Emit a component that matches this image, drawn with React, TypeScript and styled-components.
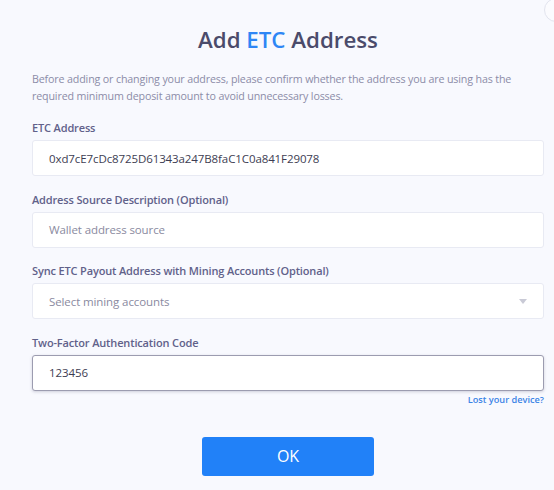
import React from "react";
import styled, { createGlobalStyle } from "styled-components";

const Global = createGlobalStyle`
  html, body { margin: 0; padding: 0; background: #f8f9fe; }
  body { font-family: "Open Sans", "Noto Sans", sans-serif; }
  * { box-sizing: border-box; }
`;

const Page = styled.div`
  position: relative;
  width: 554px;
  height: 490px;
  overflow: hidden;
  background: #f8f9fe;
  padding: 24px 10px 0 32px;
  display: flex;
  flex-direction: column;
`;

const CloseRing = styled.div`
  position: absolute;
  top: -2px;
  right: -14px;
  width: 24px;
  height: 24px;
  border-radius: 50%;
  border: 1px solid #e2e4ee;
  background: #fbfbfe;
`;

const Title = styled.h1`
  margin: 0;
  text-align: center;
  font-size: 22.3px;
  line-height: 32px;
  font-weight: 600;
  color: #4b4b6b;
`;

const Accent = styled.span`
  color: #2e86f5;
`;

const Notice = styled.p`
  margin: 15px 0 0;
  font-size: 10.7px;
  line-height: 17px;
  letter-spacing: -0.15px;
  color: #8c8ca8;
`;

const Form = styled.div`
  margin-top: 15px;
  display: flex;
  flex-direction: column;
  gap: 15.5px;
`;

const Field = styled.div`
  display: flex;
  flex-direction: column;
  gap: 4px;
`;

const Label = styled.label`
  font-size: 11px;
  line-height: 16px;
  font-weight: 600;
  letter-spacing: -0.15px;
  color: #61618a;
`;

const Box = styled.div<{ $focused?: boolean }>`
  height: 36px;
  display: flex;
  align-items: center;
  justify-content: space-between;
  padding: 0 16px 0 16px;
  background: #ffffff;
  border: 1px solid ${(p) => (p.$focused ? "#9c9cb0" : "#e8eaf3")};
  border-radius: 3px;
  box-shadow: ${(p) => (p.$focused ? "0 1px 3px rgba(80,80,110,0.25)" : "none")};
  font-size: 11.5px;
  letter-spacing: -0.1px;
`;

const Placeholder = styled.span`
  color: #8a8aa0;
`;

const Value = styled.span`
  color: #3d3d52;
`;

const Caret = styled.span`
  width: 0;
  height: 0;
  border-left: 4.5px solid transparent;
  border-right: 4.5px solid transparent;
  border-top: 5px solid #c9cad6;
`;

const LinkRow = styled.div`
  display: flex;
  justify-content: flex-end;
  margin-top: 2px;
`;

const Link = styled.a`
  font-size: 9.2px;
  font-weight: 600;
  color: #3b84e6;
  text-decoration: none;
`;

const Actions = styled.div`
  display: flex;
  justify-content: center;
  margin-top: 31px;
`;

const OkButton = styled.button`
  width: 172px;
  height: 39px;
  border: none;
  border-radius: 3px;
  background: #2181f8;
  color: #ffffff;
  font-family: "Open Sans", "Noto Sans", sans-serif;
  font-size: 16px;
  font-weight: 500;
`;

export default function App() {
  return (
    <>
      <Global />
      <Page>
        <CloseRing />
        <Title>
          Add <Accent>ETC</Accent> Address
        </Title>
        <Notice>
          Before adding or changing your address, please confirm whether the address you are using has the
          required minimum deposit amount to avoid unnecessary losses.
        </Notice>
        <Form>
          <Field>
            <Label>ETC Address</Label>
            <Box>
              <Value>0xd7cE7cDc8725D61343a247B8faC1C0a841F29078</Value>
            </Box>
          </Field>
          <Field>
            <Label>Address Source Description (Optional)</Label>
            <Box>
              <Placeholder>Wallet address source</Placeholder>
            </Box>
          </Field>
          <Field>
            <Label>Sync ETC Payout Address with Mining Accounts (Optional)</Label>
            <Box>
              <Placeholder>Select mining accounts</Placeholder>
              <Caret />
            </Box>
          </Field>
          <div>
            <Field>
              <Label>Two-Factor Authentication Code</Label>
              <Box $focused>
                <Value>123456</Value>
              </Box>
            </Field>
            <LinkRow>
              <Link href="#">Lost your device?</Link>
            </LinkRow>
          </div>
        </Form>
        <Actions>
          <OkButton>OK</OkButton>
        </Actions>
      </Page>
    </>
  );
}
